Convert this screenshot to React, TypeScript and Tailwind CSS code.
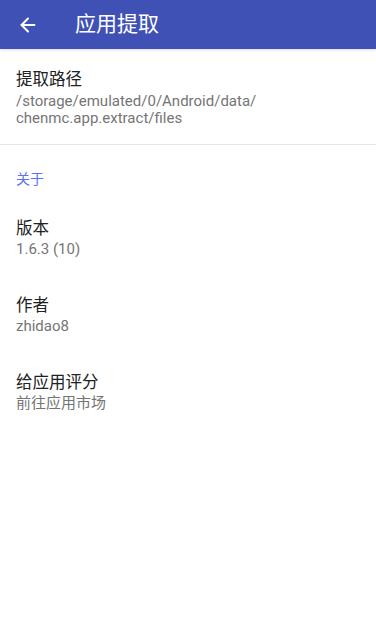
import { ArrowLeft } from "lucide-react";

const font = { fontFamily: "Roboto, 'Noto Sans CJK SC', sans-serif" };

function Pref({ title, summary }: { title: string; summary: React.ReactNode }) {
  return (
    <div className="flex min-h-[77px] flex-col justify-center px-4 py-[16px]">
      <div className="text-[16.5px] leading-[22px] text-[#212121]">{title}</div>
      <div className="mt-[1px] text-[15px] leading-[17px] text-[#757575]">{summary}</div>
    </div>
  );
}

export default function App() {
  return (
    <div className="flex h-[640px] w-[376px] flex-col bg-white" style={font}>
      {/* Toolbar */}
      <div className="relative z-10 flex h-[49px] shrink-0 items-center bg-[#3f51b5] shadow-[0_1px_3px_rgba(0,0,0,0.15)]">
        <div className="flex w-[56px] justify-center">
          <ArrowLeft className="size-[22px] text-white" strokeWidth={2.2} />
        </div>
        <div className="ml-[19px] text-[21px] leading-none text-white">应用提取</div>
      </div>

      {/* Storage path */}
      <div className="border-b border-[#e6e6e6] px-4 pb-[17px] pt-[20px]">
        <div className="text-[16.5px] leading-[22px] text-[#212121]">提取路径</div>
        <div className="mt-[2px] text-[15px] leading-[17px] text-[#757575]">
          /storage/emulated/0/Android/data/
          <br />
          chenmc.app.extract/files
        </div>
      </div>

      {/* About */}
      <div className="px-4 pb-[11px] pt-[25px] text-[14px] leading-[18px] text-[#5a6ffa]">关于</div>
      <Pref title="版本" summary="1.6.3 (10)" />
      <Pref title="作者" summary="zhidao8" />
      <Pref title="给应用评分" summary="前往应用市场" />
    </div>
  );
}
